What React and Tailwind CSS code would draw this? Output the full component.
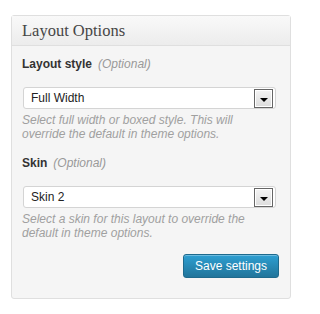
import React from "react";

const sans = { fontFamily: '"Liberation Sans", Arial, sans-serif' };

function FakeSelect({ value }) {
  return (
    <div className="flex h-[22px] w-[253px] items-center justify-between rounded-[3px] border border-[#d4d4d4] bg-white pl-[7px] pr-[2px]">
      <span className="text-[12px] leading-[14px] text-[#222]">{value}</span>
      <div className="flex h-[19px] w-[19px] items-center justify-center border border-[#666] bg-gradient-to-b from-[#f4f4f4] to-[#dcdcdc] shadow-[inset_0_0_0_1px_#fff]">
        <svg width="8" height="4" viewBox="0 0 8 4" className="mt-[3px]">
          <polygon points="0,0 8,0 4,4" fill="#000" />
        </svg>
      </div>
    </div>
  );
}

function Field({ label, value, help, first }) {
  return (
    <div>
      <div className={`${first ? "mt-[11px]" : "mt-[15px]"} text-[12px] leading-[14px]`}>
        <span className="font-bold text-[#333]">{label}</span>
        <span className="ml-[6px] italic text-[#999]">(Optional)</span>
      </div>
      <div className="mt-[16px] ml-[1px]">
        <FakeSelect value={value} />
      </div>
      <p className="mt-[4px] w-[240px] text-[12px] italic leading-[14px] text-[#a0a0a0]">
        {help}
      </p>
    </div>
  );
}

export default function App() {
  return (
    <div className="h-[314px] w-[302px] bg-white pl-[11px] pt-[15px]" style={sans}>
      <div className="w-[280px] rounded-[3px] border border-[#dfdfdf] bg-[#f5f5f5]">
        {/* header */}
        <div className="flex h-[30px] items-center border-b border-[#dfdfdf] bg-gradient-to-b from-[#f9f9f9] to-[#ececec] pl-[10px]">
          <h3
            className="text-[16.5px] leading-[18px] text-[#464646]"
            style={{ fontFamily: '"Liberation Serif", "DejaVu Serif", serif' }}
          >
            Layout Options
          </h3>
        </div>

        <div className="px-[10px] pb-[20px]">
          <Field
            first
            label="Layout style"
            value="Full Width"
            help="Select full width or boxed style. This will override the default in theme options."
          />
          <Field
            label="Skin"
            value="Skin 2"
            help="Select a skin for this layout to override the default in theme options."
          />

          <div className="mt-[14px] flex justify-end pr-[1px]">
            <button className="h-[24px] w-[96px] rounded-[3px] border border-[#1e6a8d] bg-gradient-to-b from-[#2e9fd2] to-[#21759b] text-[12px] text-white shadow-[inset_0_1px_0_rgba(255,255,255,0.3)]">
              Save settings
            </button>
          </div>
        </div>
      </div>
    </div>
  );
}
